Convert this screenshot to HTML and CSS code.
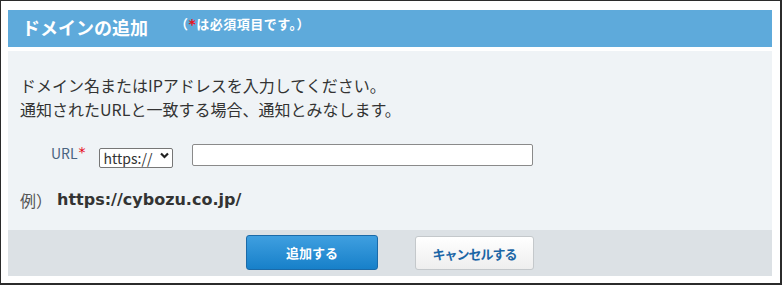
FILE: index.html
```html
<!DOCTYPE html>
<html lang="ja">
<head>
<meta charset="utf-8">
<title>ドメインの追加</title>
<link rel="stylesheet" href="styles.css">
</head>
<body>
<div class="window">
  <div class="header">
    <h1 class="title">ドメインの追加</h1>
    <span class="note">（<span class="req">*</span>は必須項目です。）</span>
  </div>
  <div class="panel">
    <p class="desc">ドメイン名またはIPアドレスを入力してください。<br>通知されたURLと一致する場合、通知とみなします。</p>
    <div class="url-row">
      <label class="url-label">URL<span class="req">*</span></label>
      <div class="select-wrap">
        <select class="scheme"><option>https://</option><option>http://</option></select>
        <svg class="chev" width="9" height="7" viewBox="0 0 9 7"><path d="M1 1.5 L4.5 5 L8 1.5" fill="none" stroke="#222" stroke-width="2.2"/></svg>
      </div>
      <input class="url-input" type="text">
    </div>
    <div class="example">
      <span class="ex-label">例）</span>
      <span class="ex-url">https://cybozu.co.jp/</span>
    </div>
  </div>
  <div class="footer">
    <button class="btn btn-primary">追加する</button>
    <button class="btn btn-cancel">キャンセルする</button>
  </div>
</div>
</body>
</html>
```
FILE: styles.css
```css
html, body {
  margin: 0;
  padding: 0;
  background: #fff;
}
body {
  font-family: "Noto Sans CJK JP", "Noto Sans", sans-serif;
  color: #333;
}
.window {
  box-sizing: border-box;
  width: 782px;
  height: 285px;
  border-style: solid;
  border-color: #2b2b2b;
  border-width: 1px 2px 2px 1px;
  padding: 9px 8px 7px 7px;
  background: #fff;
  display: flex;
  flex-direction: column;
}
.header {
  height: 37px;
  background: #5eaadb;
  display: flex;
  align-items: center;
  padding-left: 14px;
  flex-shrink: 0;
}
.title {
  margin: -3px 0 0 0;
  font-size: 18px;
  font-weight: 700;
  color: #fff;
  line-height: 24px;
}
.note {
  align-self: flex-start;
  margin-top: 5px;
  margin-left: 27px;
  font-size: 13px;
  line-height: 17px;
  font-weight: 700;
  color: #fff;
  letter-spacing: 0.5px;
}
.req {
  color: #e60012;
}
.note .req {
  color: #e8141c;
  font-family: "DejaVu Sans", sans-serif;
  font-size: 14px;
}
.panel {
  margin-top: 4px;
  background: #eff3f6;
  padding: 22px 12px 18px 12px;
}
.desc {
  margin: 0;
  font-size: 16px;
  line-height: 24px;
  color: #333;
}
.url-row {
  margin-top: 23px;
  height: 22px;
  display: flex;
  align-items: center;
  padding-left: 31px;
}
.url-label {
  font-size: 14px;
  color: #4a6480;
  line-height: 20px;
  display: flex;
  align-items: flex-start;
  margin-top: -4px;
}
.url-label .req {
  font-family: "DejaVu Sans", sans-serif;
  font-size: 14px;
  margin-left: 1px;
  line-height: 14px;
  margin-top: 2px;
}
.select-wrap {
  position: relative;
  margin-left: 13px;
  height: 20px;
}
.scheme {
  appearance: none;
  -webkit-appearance: none;
  box-sizing: border-box;
  width: 74px;
  height: 20px;
  border: 1px solid #767676;
  border-radius: 2px;
  background: #fff;
  font-family: "Noto Sans CJK JP", "Noto Sans", sans-serif;
  font-size: 14px;
  line-height: 18px;
  color: #333;
  padding: 0 0 0 4px;
  margin: 0;
}
.chev {
  position: absolute;
  right: 4px;
  top: 7px;
  pointer-events: none;
}
.url-input {
  box-sizing: border-box;
  margin: 0 0 0 19px;
  width: 341px;
  height: 22px;
  border: 1px solid #8a8a8a;
  border-radius: 2px;
  background: #fff;
  padding: 0 4px;
}
.example {
  margin-top: 22px;
  display: flex;
  align-items: center;
  line-height: 24px;
}
.ex-label {
  font-size: 16px;
  color: #555;
}
.ex-url {
  margin-left: 5px;
  font-family: "DejaVu Sans", sans-serif;
  font-size: 16px;
  font-weight: 700;
  color: #333;
}
.footer {
  flex: 1;
  background: #dce1e5;
  display: flex;
  align-items: flex-start;
  padding: 5px 0 0 238px;
  gap: 37px;
}
.btn {
  box-sizing: border-box;
  height: 35px;
  border-radius: 3px;
  font-family: "Noto Sans CJK JP", "Noto Sans", sans-serif;
  font-size: 13px;
  font-weight: 700;
  padding: 0;
  margin: 0;
  cursor: pointer;
}
.btn-primary {
  width: 132px;
  color: #fff;
  border: 1px solid #1b6aa8;
  background: linear-gradient(#3f9fe0, #1780c9);
}
.btn-cancel {
  width: 119px;
  height: 34px;
  margin-top: 1px;
  color: #1c66a6;
  border: 1px solid #c4c8cb;
  background: linear-gradient(#ffffff, #eeeeee);
  letter-spacing: -1px;
}
```
